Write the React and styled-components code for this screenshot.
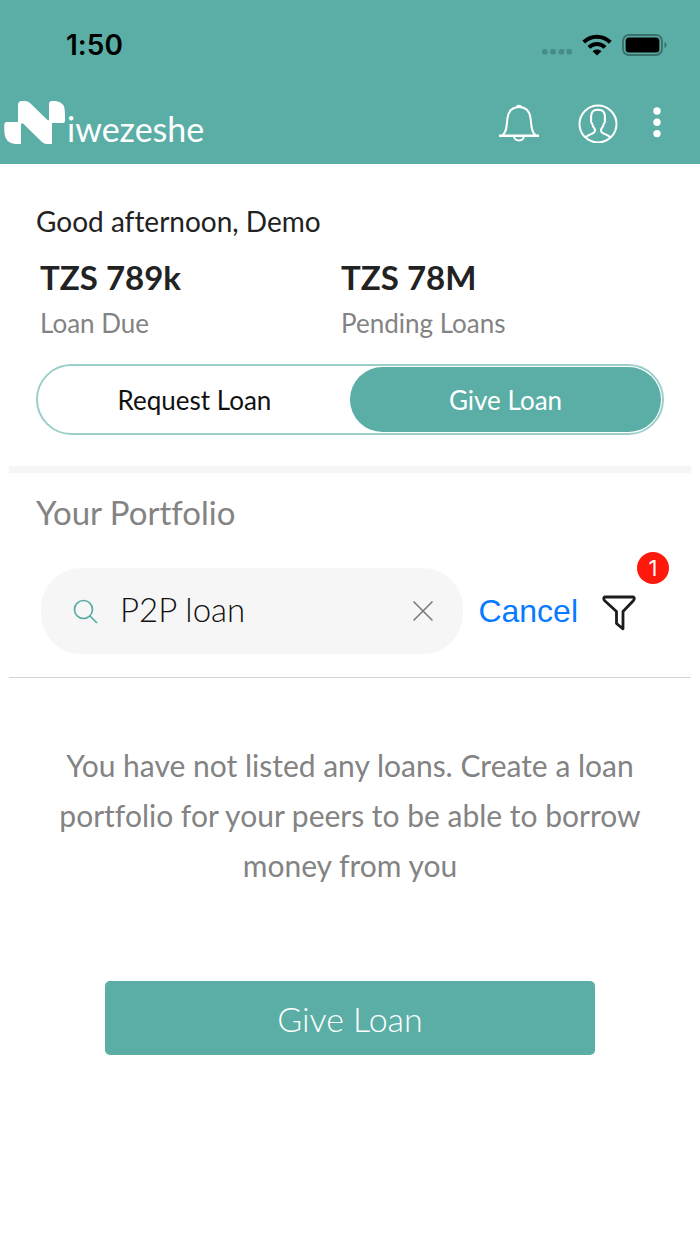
import React, { useState } from 'react';
import styled, { createGlobalStyle } from 'styled-components';

const teal = '#5aaea6';
const sans = "Lato, 'Open Sans', sans-serif";

const GlobalStyle = createGlobalStyle`
  * {
    box-sizing: border-box;
  }
  body {
    margin: 0;
    background: #fff;
    font-family: ${sans};
    font-variant-ligatures: none;
    color: #222;
  }
  h1, h2, p, dl, dt, dd {
    margin: 0;
  }
  button, input {
    font-family: inherit;
    border: 0;
    padding: 0;
    background: none;
  }
  svg {
    display: block;
  }
`;

const Header = styled.header`
  background: ${teal};
`;

const StatusBar = styled.div`
  display: flex;
  align-items: center;
  justify-content: space-between;
  height: 90px;
  padding: 0 32px 0 66px;
`;

const Time = styled.span`
  font-family: Inter, sans-serif;
  font-size: 28px;
  font-weight: 600;
  line-height: 32px;
  color: #000;
`;

const StatusIcons = styled.div`
  display: flex;
  align-items: center;
  gap: 10px;
`;

const TopBar = styled.div`
  display: flex;
  align-items: center;
  justify-content: space-between;
  height: 74px;
  padding: 0 32px 8px 4px;
`;

const Brand = styled.a`
  display: flex;
  align-items: center;
  gap: 1px;
  color: #fff;
  text-decoration: none;
`;

const BrandName = styled.span`
  padding-top: 12px;
  font-size: 34px;
  line-height: 40px;
`;

const Actions = styled.div`
  display: flex;
  align-items: center;
`;

const IconButton = styled.button`
  display: flex;
  align-items: center;
  justify-content: center;
  width: ${(props) => props.$width || 40}px;
  height: 40px;
  color: ${(props) => props.$color || '#fff'};
  cursor: pointer;
`;

const Summary = styled.section`
  padding: 39px 36px 31px;
`;

const Greeting = styled.h1`
  font-size: 28px;
  font-weight: 400;
  line-height: 36px;
`;

const Totals = styled.dl`
  display: grid;
  grid-template-columns: 301px 1fr;
  padding: 0 4px;
`;

const Total = styled.div`
  display: flex;
  flex-direction: column-reverse;
`;

const Amount = styled.dd`
  font-size: 33px;
  font-weight: 700;
  line-height: 44px;
  padding-top: 16px;
`;

const Label = styled.dt`
  font-size: 26px;
  line-height: 32px;
  margin-top: 8px;
  color: #838383;
`;

const Toggle = styled.div`
  display: flex;
  height: 71px;
  margin-top: 25px;
  padding: 1px;
  border: 2px solid #9bd0ca;
  border-radius: 36px;
`;

const ToggleButton = styled.button`
  flex: 1;
  border-radius: 33px;
  font-size: 26px;
  background: ${(props) => (props.$active ? teal : 'transparent')};
  color: ${(props) => (props.$active ? '#fff' : '#111')};
  cursor: pointer;
`;

const Portfolio = styled.section`
  margin: 0 9px;
  border-top: 7px solid #f5f5f5;
`;

const Heading = styled.h2`
  padding: 19px 27px 0;
  font-size: 33px;
  font-weight: 400;
  line-height: 40px;
  color: #838383;
`;

const SearchRow = styled.form`
  display: flex;
  align-items: center;
  gap: 15px;
  padding: 36px 52px 23px 32px;
  border-bottom: 1px solid #d5d5d5;
`;

const SearchBox = styled.label`
  display: flex;
  flex: 1;
  align-items: center;
  min-width: 0;
  height: 86px;
  padding: 0 20px 0 32px;
  border-radius: 40px;
  background: #f6f6f6;
`;

const SearchInput = styled.input`
  flex: 1;
  min-width: 0;
  height: 40px;
  margin: 0 0 4px 22px;
  font-size: 33px;
  font-weight: 300;
  color: #111;
  outline: none;
`;

const Cancel = styled.button`
  font-family: 'Liberation Sans', sans-serif;
  font-size: 32px;
  line-height: 40px;
  color: #077bff;
  cursor: pointer;
`;

const FilterWrap = styled.div`
  position: relative;
  margin-left: 6px;
`;

const Badge = styled.span`
  position: absolute;
  top: -39px;
  right: -30px;
  width: 32px;
  height: 32px;
  border-radius: 50%;
  background: #ff190c;
  color: #fff;
  font-family: Inter, sans-serif;
  font-size: 22px;
  line-height: 32px;
  text-align: center;
`;

const Empty = styled.section`
  padding: 62px 40px;
  text-align: center;
`;

const Message = styled.p`
  font-size: 30px;
  line-height: 50px;
  color: #838383;
`;

const GiveButton = styled.button`
  width: 79%;
  height: 74px;
  margin-top: 91px;
  border-radius: 5px;
  background: ${teal};
  color: #fff;
  font-size: 34px;
  font-weight: 300;
  cursor: pointer;
`;

const Signal = () => (
  <svg width="30" height="22" viewBox="0 0 30 22" fill="#478c86">
    <rect x="0" y="15" width="5.6" height="5.6" rx="2" />
    <rect x="8.3" y="15" width="5.6" height="5.6" rx="2" />
    <rect x="16.6" y="15" width="5.6" height="5.6" rx="2" />
    <rect x="24.4" y="15" width="5.6" height="5.6" rx="2" />
  </svg>
);

const Wifi = () => (
  <svg width="30" height="22" viewBox="0 0 30 22" fill="none" stroke="#000" strokeWidth="4">
    <path d="M1.7 8.2C9 .8 20.6 .8 28.3 8.2" />
    <path d="M6.900 13.400C11.500 9 18.300 9 23.100 13.400" />
    <path d="M10.500 17.200C13 14.800 17 14.800 19.500 17.200L15 21.500Z" fill="#000" stroke="none" />
  </svg>
);

const Battery = () => (
  <svg width="46" height="22" viewBox="0 0 46 22">
    <rect x="1" y="1" width="39" height="20" rx="6" fill="none" stroke="#39706b" strokeWidth="1.8" />
    <rect x="3.600" y="3.600" width="33.800" height="14.800" rx="3.500" />
    <path d="M42.500 8C45.300 9 45.300 13 42.500 14Z" fill="#39706b" />
  </svg>
);

const Logo = () => (
  <svg width="62" height="44" viewBox="0 0 62 44" fill="#fff">
    <path d="M2.500 21H14V4Q14 0 18 0H21Q24 0 26 2L44 19.500L45 19V3Q45 0 48 0H52Q61 1 61 12V20Q61 22 59 22H48V43H43Q40 43 38 41L19 22.500Q18 22 17 23V43H11Q1 42 .3 31V23.500Q.3 21 2.500 21Z" />
  </svg>
);

const Bell = () => (
  <svg width="40" height="40" viewBox="0 0 40 40" fill="none" stroke="#fff" strokeWidth="2">
    <path d="M0 32.800H40" strokeWidth="2.400" />
    <path d="M3.500 32C8 29 7.500 22 8.500 15C9.500 8 13.500 4 20 4S30.500 8 31.500 15C32.500 22 32 29 36.500 32" />
    <path d="M17 4C17 1 23 1 23 4Z" fill="#fff" stroke="none" />
    <path d="M15 33C15.500 39 24.500 39 25 33" />
  </svg>
);

const Profile = () => (
  <svg width="40" height="40" viewBox="0 0 40 40" fill="none" stroke="#fff" strokeWidth="2">
    <circle cx="20" cy="21" r="18.500" />
    <path d="M7.500 34.500C10 31.500 14 31.500 16.200 29.300C17.500 28 17 26.500 16.500 25.500C15 24 14.500 22.500 14 20.300C12.700 19.800 12.800 18 13.200 17.500C12.500 11 13.500 6.800 20 6.800S27.500 11 26.800 17.500C27.200 18 27.300 19.800 26 20.300C25.500 22.500 25 24 23.500 25.500C23 26.500 22.500 28 23.800 29.300C26 31.500 30 31.500 32.500 34.500" />
  </svg>
);

const Dots = () => (
  <svg width="8" height="32" viewBox="0 0 8 32" fill="#fff">
    <circle cx="4" cy="4" r="3.700" />
    <circle cx="4" cy="15.300" r="3.700" />
    <circle cx="4" cy="26.600" r="3.700" />
  </svg>
);

const Magnifier = () => (
  <svg width="25" height="25" viewBox="0 0 25 25" fill="none" stroke={teal} strokeWidth="1.700">
    <circle cx="10.500" cy="10.500" r="9" />
    <path d="M17 17L24 24" />
  </svg>
);

const Cross = () => (
  <svg width="20" height="20" viewBox="0 0 20 20" fill="none" stroke="currentColor" strokeWidth="1.500">
    <path d="M.5 .5L19.500 19.500M19.500 .5L.5 19.500" />
  </svg>
);

const Funnel = () => (
  <svg width="34" height="40" viewBox="0 0 34 40" fill="none" stroke="#1c1c1c" strokeWidth="2.800" strokeLinejoin="round">
    <path d="M2.500 6H31.500Q33 7.500 31.500 9.500L21 20.500V37.800L14.500 32.500V20.500L2.500 9.500Q1 7.500 2.500 6Z" />
  </svg>
);

const App = () => {
  const [tab, setTab] = useState('give');
  const [query, setQuery] = useState('P2P loan');

  return (
    <>
      <GlobalStyle />
      <Header>
        <StatusBar>
          <Time>1:50</Time>
          <StatusIcons>
            <Signal />
            <Wifi />
            <Battery />
          </StatusIcons>
        </StatusBar>
        <TopBar>
          <Brand href="#">
            <Logo />
            <BrandName>iwezeshe</BrandName>
          </Brand>
          <Actions>
            <IconButton $width={62} aria-label="Notifications"><Bell /></IconButton>
            <IconButton $width={96} aria-label="Profile"><Profile /></IconButton>
            <IconButton $width={22} aria-label="More"><Dots /></IconButton>
          </Actions>
        </TopBar>
      </Header>
      <main>
        <Summary>
          <Greeting>Good afternoon, Demo</Greeting>
          <Totals>
            <Total>
              <Label>Loan Due</Label>
              <Amount>TZS 789k</Amount>
            </Total>
            <Total>
              <Label>Pending Loans</Label>
              <Amount>TZS 78M</Amount>
            </Total>
          </Totals>
          <Toggle>
            <ToggleButton $active={tab === 'request'} onClick={() => setTab('request')}>Request Loan</ToggleButton>
            <ToggleButton $active={tab === 'give'} onClick={() => setTab('give')}>Give Loan</ToggleButton>
          </Toggle>
        </Summary>
        <Portfolio>
          <Heading>Your Portfolio</Heading>
          <SearchRow onSubmit={(e) => e.preventDefault()}>
            <SearchBox>
              <Magnifier />
              <SearchInput aria-label="Search portfolio" value={query} onChange={(e) => setQuery(e.target.value)} />
              <IconButton type="button" $color="#777" aria-label="Clear" onClick={() => setQuery('')}><Cross /></IconButton>
            </SearchBox>
            <Cancel type="button">Cancel</Cancel>
            <FilterWrap>
              <IconButton type="button" aria-label="Filter"><Funnel /></IconButton>
              <Badge>1</Badge>
            </FilterWrap>
          </SearchRow>
        </Portfolio>
        <Empty>
          <Message>You have not listed any loans. Create a loan portfolio for your peers to be able to borrow money from you</Message>
          <GiveButton>Give Loan</GiveButton>
        </Empty>
      </main>
    </>
  );
};

export default App;
